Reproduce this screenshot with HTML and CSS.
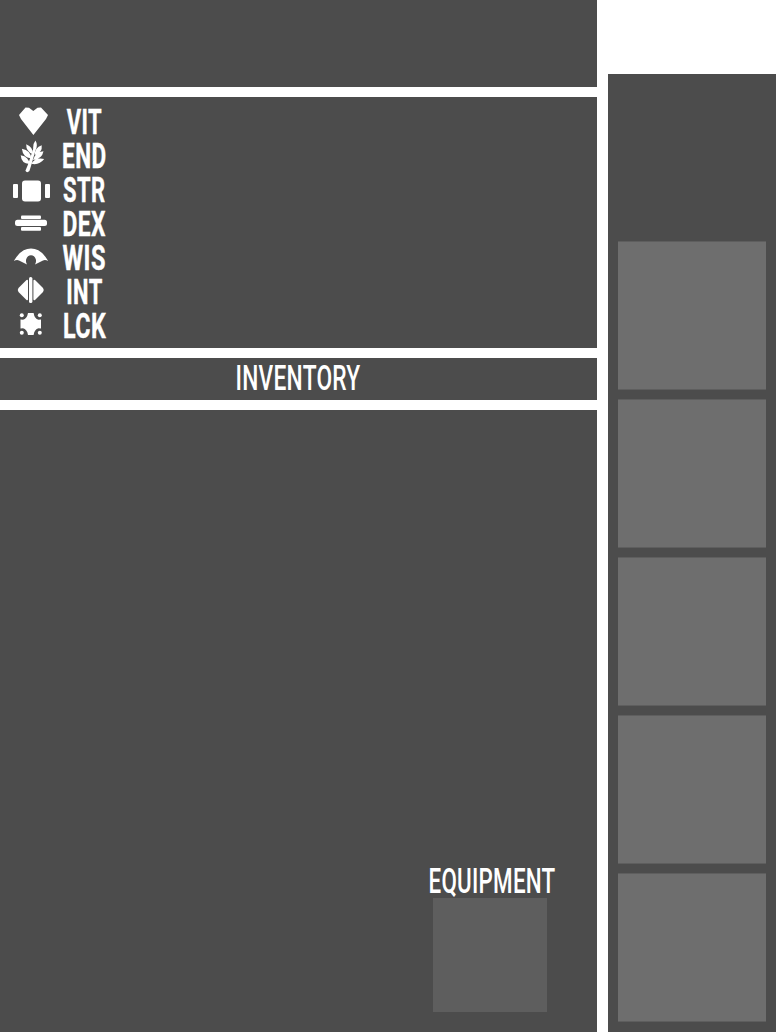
FILE: index.html
```html
<!DOCTYPE html>
<html lang="en">
<head>
<meta charset="utf-8">
<title>Inventory</title>
<link rel="stylesheet" href="styles.css">
</head>
<body>
<div class="screen">
  <main class="main">
    <section class="panel header"></section>
    <section class="panel stats">
      <div class="stat">
        <svg class="icon" viewBox="0 105 56 34"><path d="M19 115 25.5 107.6 29 107.8 33.3 111 37.5 107.8 41 107.6 48 115 46 119 33.4 135 21 119Z"/></svg>
        <svg class="label" viewBox="56 105 60 34"><text x="66.7" y="133.6" textLength="35.5" lengthAdjust="spacingAndGlyphs">VIT</text></svg>
      </div>
      <div class="stat">
        <svg class="icon" viewBox="0 139 56 34"><path d="M35.4 140.6Q38.2 145 35.6 150L31 166 29.4 171Q27 173.4 25.4 170.8L27.8 165 33.2 149Q32.8 144 35.4 140.6Z"/><path d="M26.2 144.2Q33.3 147 32.7 154 26 151.5 26.2 144.2ZM21.9 148.8Q30.8 150.5 31.3 158.5 22.8 157.5 21.9 148.8ZM20.7 155.2Q29 156.7 29.4 164 21.3 163.5 20.700 155.200ZM41.700 145.200Q42.700 152.500 34.800 154.900 34.600 147.800 41.700 145.200ZM43.500 151.200Q42 159.200 33 159.900 35 152 43.500 151.200ZM44.200 159Q39 165.700 31.200 163.700 35.500 157 44.200 159Z"/></svg>
        <svg class="label" viewBox="56 139 60 34"><text x="62" y="167.6" textLength="44.6" lengthAdjust="spacingAndGlyphs">END</text></svg>
      </div>
      <div class="stat">
        <svg class="icon" viewBox="0 173 56 34"><rect x="13" y="184" width="5" height="14" rx="1"/><rect x="22" y="180.5" width="19" height="21" rx="3"/><rect x="45" y="184" width="5" height="14" rx="1"/></svg>
        <svg class="label" viewBox="56 173 60 34"><text x="63" y="201.6" textLength="42.6" lengthAdjust="spacingAndGlyphs">STR</text></svg>
      </div>
      <div class="stat">
        <svg class="icon" viewBox="0 207 56 34"><rect x="21" y="215.4" width="20" height="3.6" rx="1"/><rect x="15" y="219.7" width="32" height="6.4" rx="2.5"/><rect x="21" y="227" width="20" height="3.8" rx="1"/></svg>
        <svg class="label" viewBox="56 207 60 34"><text x="62.5" y="235.6" textLength="43.5" lengthAdjust="spacingAndGlyphs">DEX</text></svg>
      </div>
      <div class="stat">
        <svg class="icon" viewBox="0 241 56 34"><path d="M13.800 261Q21 248.600 31 248.600T48.200 261Q45.500 259.600 43 260.400L35 264.500Q36.500 261.800 35.800 259.300 34.500 255.200 31 255.200 27.500 255.200 26.200 259.300 25.500 261.800 27 264.500L19 260.400Q16.500 259.600 13.800 261Z"/></svg>
        <svg class="label" viewBox="56 241 60 34"><text x="62.5" y="269.6" textLength="43.5" lengthAdjust="spacingAndGlyphs">WIS</text></svg>
      </div>
      <div class="stat">
        <svg class="icon" viewBox="0 275 56 34"><rect x="29" y="277" width="3.4" height="26" rx="1.6"/><path d="M26.5 280Q28 279 28 281V299Q28 301 26.5 300L18.5 292Q17 290 18.5 288ZM35 280Q33.4 279 33.4 281V299Q33.4 301 35 300L43 292Q44.5 290 43 288Z"/></svg>
        <svg class="label" viewBox="56 275 60 34"><text x="66.2" y="303.6" textLength="36.5" lengthAdjust="spacingAndGlyphs">INT</text></svg>
      </div>
      <div class="stat">
        <svg class="icon" viewBox="0 309 56 34"><circle cx="21.8" cy="315.3" r="2"/><circle cx="39.8" cy="315.3" r="2"/><circle cx="21.8" cy="332.8" r="2"/><circle cx="39.8" cy="332.8" r="2"/><path d="M28 313H33.600Q34.500 318.800 38.500 319.700L41 319.400V328.600L38.500 328.300Q34.500 329.200 33.600 335H28Q27 329.200 23 328.300L20.500 328.600V319.400L23 319.700Q27 318.800 28 313Z"/></svg>
        <svg class="label" viewBox="56 309 60 34"><text x="63" y="337.6" textLength="43.3" lengthAdjust="spacingAndGlyphs">LCK</text></svg>
      </div>
    </section>
    <section class="panel titlebar">
      <svg class="heading" viewBox="0 0 140 42"><text x="6.5" y="32" textLength="125" lengthAdjust="spacingAndGlyphs">INVENTORY</text></svg>
    </section>
    <section class="panel bag">
      <div class="equipment">
        <svg class="heading" viewBox="0 0 140 42"><text x="6.5" y="32" textLength="127" lengthAdjust="spacingAndGlyphs">EQUIPMENT</text></svg>
        <div class="equip-slot"></div>
      </div>
    </section>
  </main>
  <aside class="sidebar">
    <div class="slot"></div>
    <div class="slot"></div>
    <div class="slot"></div>
    <div class="slot"></div>
    <div class="slot"></div>
  </aside>
</div>
</body>
</html>
```
FILE: styles.css
```css
* {
  box-sizing: border-box;
}

body {
  margin: 0;
  background: #fff;
  font-family: Roboto, "Liberation Sans", sans-serif;
}

.screen {
  display: flex;
  gap: 11px;
  width: 776px;
  height: 1032px;
}

.main {
  display: grid;
  grid-template-rows: 87px 251px 42px 1fr;
  gap: 10px;
  width: 597px;
}

.panel,
.sidebar {
  background: #4c4c4c;
}

.stats {
  padding-top: 8px;
}

.stat {
  display: flex;
  height: 34px;
}

.icon {
  width: 56px;
  height: 34px;
  fill: #fff;
}

.label {
  width: 60px;
  height: 34px;
  overflow: visible;
  fill: #fff;
  stroke: #fff;
  stroke-width: 0.4px;
  font-size: 35px;
  font-weight: 700;
  letter-spacing: 0.7px;
}

.heading {
  display: block;
  width: 140px;
  height: 42px;
  overflow: visible;
  fill: #fff;
  font-size: 35px;
  font-weight: 500;
  letter-spacing: 0.4px;
}

.titlebar {
  display: flex;
  padding-left: 229px;
}

.bag {
  display: flex;
  justify-content: flex-end;
  align-items: flex-end;
  padding: 0 35px 20px 0;
}

.equipment {
  width: 140px;
}

.equip-slot {
  width: 114px;
  height: 114px;
  margin: -5px 0 0 11px;
  background: #5e5e5e;
}

.sidebar {
  display: flex;
  flex-direction: column;
  gap: 9px;
  width: 168px;
  margin-top: 74px;
  padding: 167px 10px 0;
}

.slot {
  height: 149px;
  background: #6e6e6e;
  border: solid #5e5e5e;
  border-width: 1px 0;
}
```
